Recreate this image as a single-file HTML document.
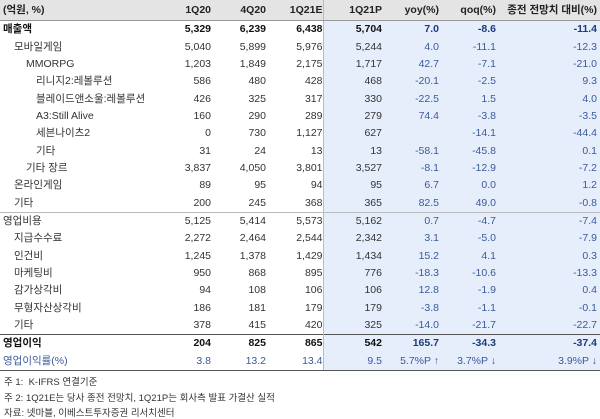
<!DOCTYPE html>
<html><head><meta charset="utf-8"><style>
body{margin:0;width:600px;height:419px;background:#fff;font-family:"Liberation Sans","Noto Sans CJK KR",sans-serif;font-size:10.5px;color:#333;overflow:hidden;position:relative}
table{position:absolute;left:0;top:0;border-collapse:collapse;table-layout:fixed;width:600px}
td{height:17.35px;padding:0;text-align:right;white-space:nowrap;line-height:17px}
td:first-child{text-align:left;padding-left:3px}
td.p{padding-right:3px}
tr.h td{height:20px;background:#e4e4e4;font-weight:bold;color:#222;border-bottom:1px solid #999}
.b td{font-weight:bold;color:#111}
.bl{background:#e6eefc}
.c{color:#3b5a9a}
.b .c{color:#1d3a7a}
tr.s td{border-top:1px solid #bbb}
tr.k td{border-top:1px solid #555}
tr.last td{border-bottom:1.5px solid #555;color:#3b5a9a}
tr.last td.bl{color:#3b5a9a}
.bd{border-left:1px solid #bbb}
.i1{padding-left:14px!important}.i2{padding-left:26px!important}.i3{padding-left:36px!important}
.n{position:absolute;left:4px;font-size:9.5px;color:#333}
</style></head><body>
<table>
<colgroup><col style="width:160px"><col style="width:51px"><col style="width:55px"><col style="width:57px"><col style="width:59px"><col style="width:57px"><col style="width:57px"><col style="width:104px"></colgroup>
<tr class="h"><td>(억원, %)</td><td>1Q20</td><td>4Q20</td><td>1Q21E</td><td class="bl bd">1Q21P</td><td class="bl c">yoy(%)</td><td class="bl c">qoq(%)</td><td class="bl c p">종전 전망치 대비(%)</td></tr>
<tr class="b"><td>매출액</td><td>5,329</td><td>6,239</td><td>6,438</td><td class="bl bd">5,704</td><td class="bl c">7.0</td><td class="bl c">-8.6</td><td class="bl c p">-11.4</td></tr>
<tr><td class="i1">모바일게임</td><td>5,040</td><td>5,899</td><td>5,976</td><td class="bl bd">5,244</td><td class="bl c">4.0</td><td class="bl c">-11.1</td><td class="bl c p">-12.3</td></tr>
<tr><td class="i2">MMORPG</td><td>1,203</td><td>1,849</td><td>2,175</td><td class="bl bd">1,717</td><td class="bl c">42.7</td><td class="bl c">-7.1</td><td class="bl c p">-21.0</td></tr>
<tr><td class="i3">리니지2:레볼루션</td><td>586</td><td>480</td><td>428</td><td class="bl bd">468</td><td class="bl c">-20.1</td><td class="bl c">-2.5</td><td class="bl c p">9.3</td></tr>
<tr><td class="i3">블레이드앤소울:레볼루션</td><td>426</td><td>325</td><td>317</td><td class="bl bd">330</td><td class="bl c">-22.5</td><td class="bl c">1.5</td><td class="bl c p">4.0</td></tr>
<tr><td class="i3">A3:Still Alive</td><td>160</td><td>290</td><td>289</td><td class="bl bd">279</td><td class="bl c">74.4</td><td class="bl c">-3.8</td><td class="bl c p">-3.5</td></tr>
<tr><td class="i3">세븐나이츠2</td><td>0</td><td>730</td><td>1,127</td><td class="bl bd">627</td><td class="bl c"></td><td class="bl c">-14.1</td><td class="bl c p">-44.4</td></tr>
<tr><td class="i3">기타</td><td>31</td><td>24</td><td>13</td><td class="bl bd">13</td><td class="bl c">-58.1</td><td class="bl c">-45.8</td><td class="bl c p">0.1</td></tr>
<tr><td class="i2">기타 장르</td><td>3,837</td><td>4,050</td><td>3,801</td><td class="bl bd">3,527</td><td class="bl c">-8.1</td><td class="bl c">-12.9</td><td class="bl c p">-7.2</td></tr>
<tr><td class="i1">온라인게임</td><td>89</td><td>95</td><td>94</td><td class="bl bd">95</td><td class="bl c">6.7</td><td class="bl c">0.0</td><td class="bl c p">1.2</td></tr>
<tr><td class="i1">기타</td><td>200</td><td>245</td><td>368</td><td class="bl bd">365</td><td class="bl c">82.5</td><td class="bl c">49.0</td><td class="bl c p">-0.8</td></tr>
<tr class="s"><td>영업비용</td><td>5,125</td><td>5,414</td><td>5,573</td><td class="bl bd">5,162</td><td class="bl c">0.7</td><td class="bl c">-4.7</td><td class="bl c p">-7.4</td></tr>
<tr><td class="i1">지급수수료</td><td>2,272</td><td>2,464</td><td>2,544</td><td class="bl bd">2,342</td><td class="bl c">3.1</td><td class="bl c">-5.0</td><td class="bl c p">-7.9</td></tr>
<tr><td class="i1">인건비</td><td>1,245</td><td>1,378</td><td>1,429</td><td class="bl bd">1,434</td><td class="bl c">15.2</td><td class="bl c">4.1</td><td class="bl c p">0.3</td></tr>
<tr><td class="i1">마케팅비</td><td>950</td><td>868</td><td>895</td><td class="bl bd">776</td><td class="bl c">-18.3</td><td class="bl c">-10.6</td><td class="bl c p">-13.3</td></tr>
<tr><td class="i1">감가상각비</td><td>94</td><td>108</td><td>106</td><td class="bl bd">106</td><td class="bl c">12.8</td><td class="bl c">-1.9</td><td class="bl c p">0.4</td></tr>
<tr><td class="i1">무형자산상각비</td><td>186</td><td>181</td><td>179</td><td class="bl bd">179</td><td class="bl c">-3.8</td><td class="bl c">-1.1</td><td class="bl c p">-0.1</td></tr>
<tr><td class="i1">기타</td><td>378</td><td>415</td><td>420</td><td class="bl bd">325</td><td class="bl c">-14.0</td><td class="bl c">-21.7</td><td class="bl c p">-22.7</td></tr>
<tr class="b k"><td>영업이익</td><td>204</td><td>825</td><td>865</td><td class="bl bd">542</td><td class="bl c">165.7</td><td class="bl c">-34.3</td><td class="bl c p">-37.4</td></tr>
<tr class="last"><td>영업이익률(%)</td><td>3.8</td><td>13.2</td><td>13.4</td><td class="bl bd">9.5</td><td class="bl">5.7%P ↑</td><td class="bl">3.7%P ↓</td><td class="bl p">3.9%P ↓</td></tr>
</table>
<div class="n" style="top:374px">주 1:&nbsp; K-IFRS 연결기준</div>
<div class="n" style="top:390px">주 2: 1Q21E는 당사 종전 전망치, 1Q21P는 회사측 발표 가결산 실적</div>
<div class="n" style="top:405px">자료: 넷마블, 이베스트투자증권 리서치센터</div>
</body></html>
